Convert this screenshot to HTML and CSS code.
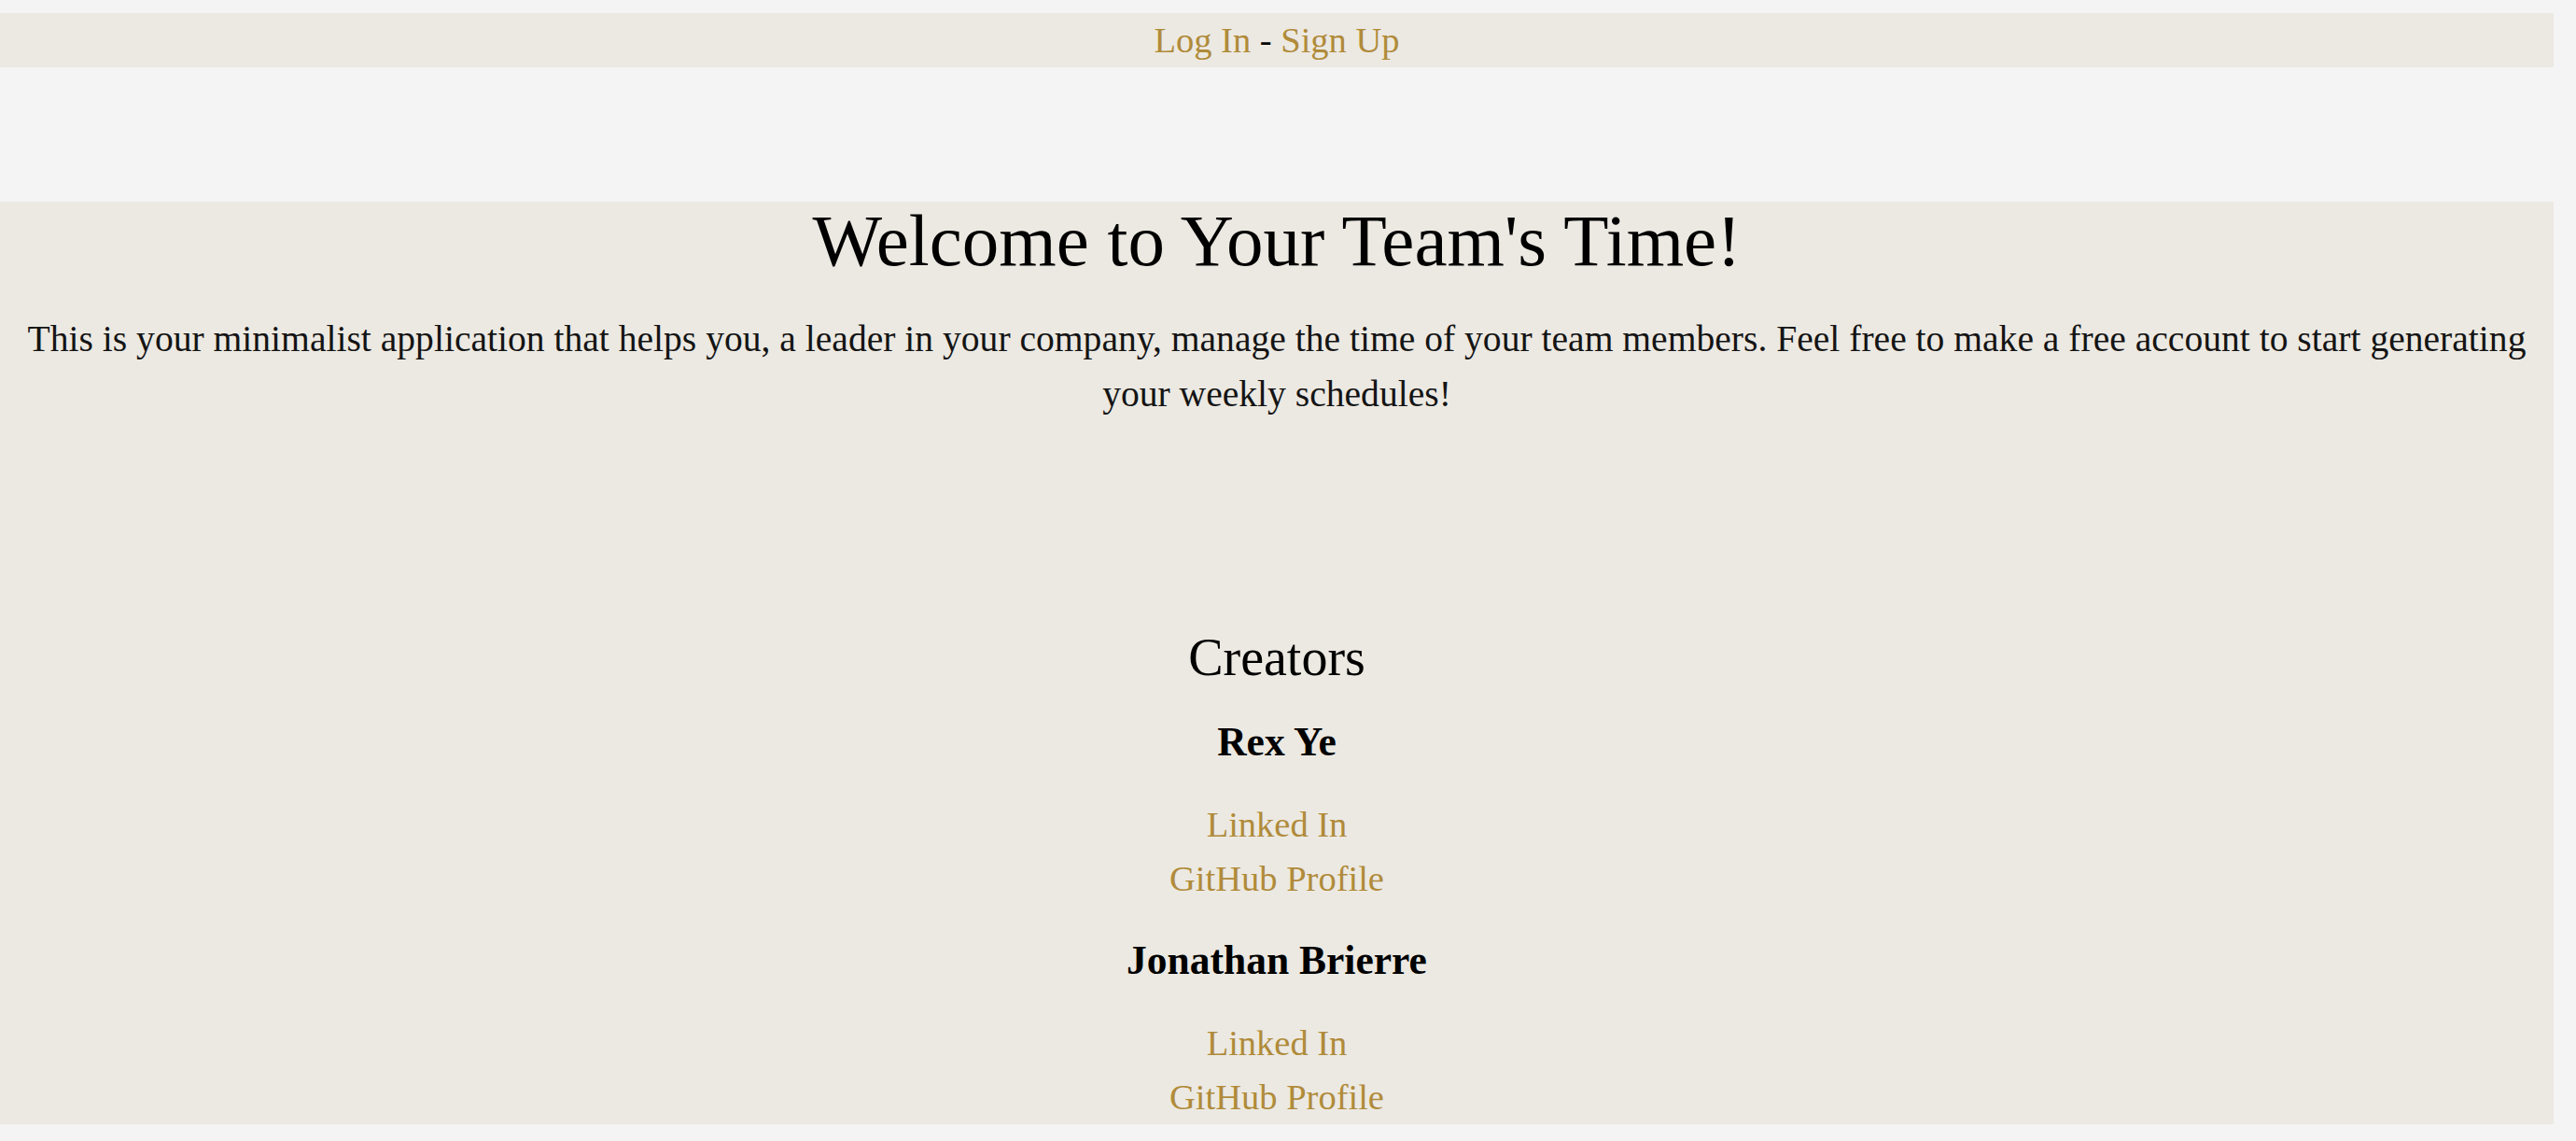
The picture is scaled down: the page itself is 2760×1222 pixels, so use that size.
FILE: index.html
```html
<!DOCTYPE html>
<html lang="en">
<head>
<meta charset="utf-8">
<title>Your Team's Time</title>
<link rel="stylesheet" href="styles.css">
</head>
<body>
<div class="page">
  <nav class="topbar">
    <a class="link" href="#">Log In</a> - <a class="link" href="#">Sign Up</a>
  </nav>
  <main class="main">
    <h1 class="title">Welcome to Your Team's Time!</h1>
    <p class="intro">This is your minimalist application that helps you, a leader in your company, manage the time of your team members. Feel free to make a free account to start generating your weekly schedules!</p>
    <section class="creators">
      <h2 class="creators-title">Creators</h2>
      <div class="creator">
        <h4 class="creator-name">Rex Ye</h4>
        <div class="creator-links">
          <a class="link block" href="#">Linked In</a>
          <a class="link block" href="#">GitHub Profile</a>
        </div>
      </div>
      <div class="creator">
        <h4 class="creator-name">Jonathan Brierre</h4>
        <div class="creator-links">
          <a class="link block" href="#">Linked In</a>
          <a class="link block" href="#">GitHub Profile</a>
        </div>
      </div>
    </section>
  </main>
</div>
</body>
</html>
```

FILE: styles.css
```css
html, body {
  margin: 0;
  padding: 0;
  background: #f4f4f4;
}

body {
  font-family: "Liberation Serif", "Times New Roman", serif;
  font-size: 38.5px;
  color: #141414;
}

.page {
  padding: 14px 24px 18px 0;
}

.topbar {
  background: #ece9e2;
  height: 58px;
  line-height: 58px;
  text-align: center;
  color: #000;
}

.link {
  color: #b08b3a;
  text-decoration: none;
}

.link.block {
  display: block;
}

.main {
  margin-top: 144px;
  background: #ece9e2;
  text-align: center;
  height: 988px;
  box-sizing: border-box;
}

.title {
  margin: 0;
  font-size: 79px;
  line-height: 84px;
  font-weight: normal;
  color: #000;
}

.intro {
  margin: 34px 0 0;
  font-size: 39.6px;
  line-height: 59px;
  padding: 0 20px;
}

.creators {
  margin-top: 220px;
}

.creators-title {
  margin: 0;
  font-size: 56px;
  line-height: 64px;
  font-weight: normal;
  color: #000;
}

.creator-name {
  margin: 34px 0 36px;
  font-size: 43.5px;
  line-height: 48px;
  font-weight: bold;
  color: #000;
}

.creator-links {
  line-height: 58px;
}
```
